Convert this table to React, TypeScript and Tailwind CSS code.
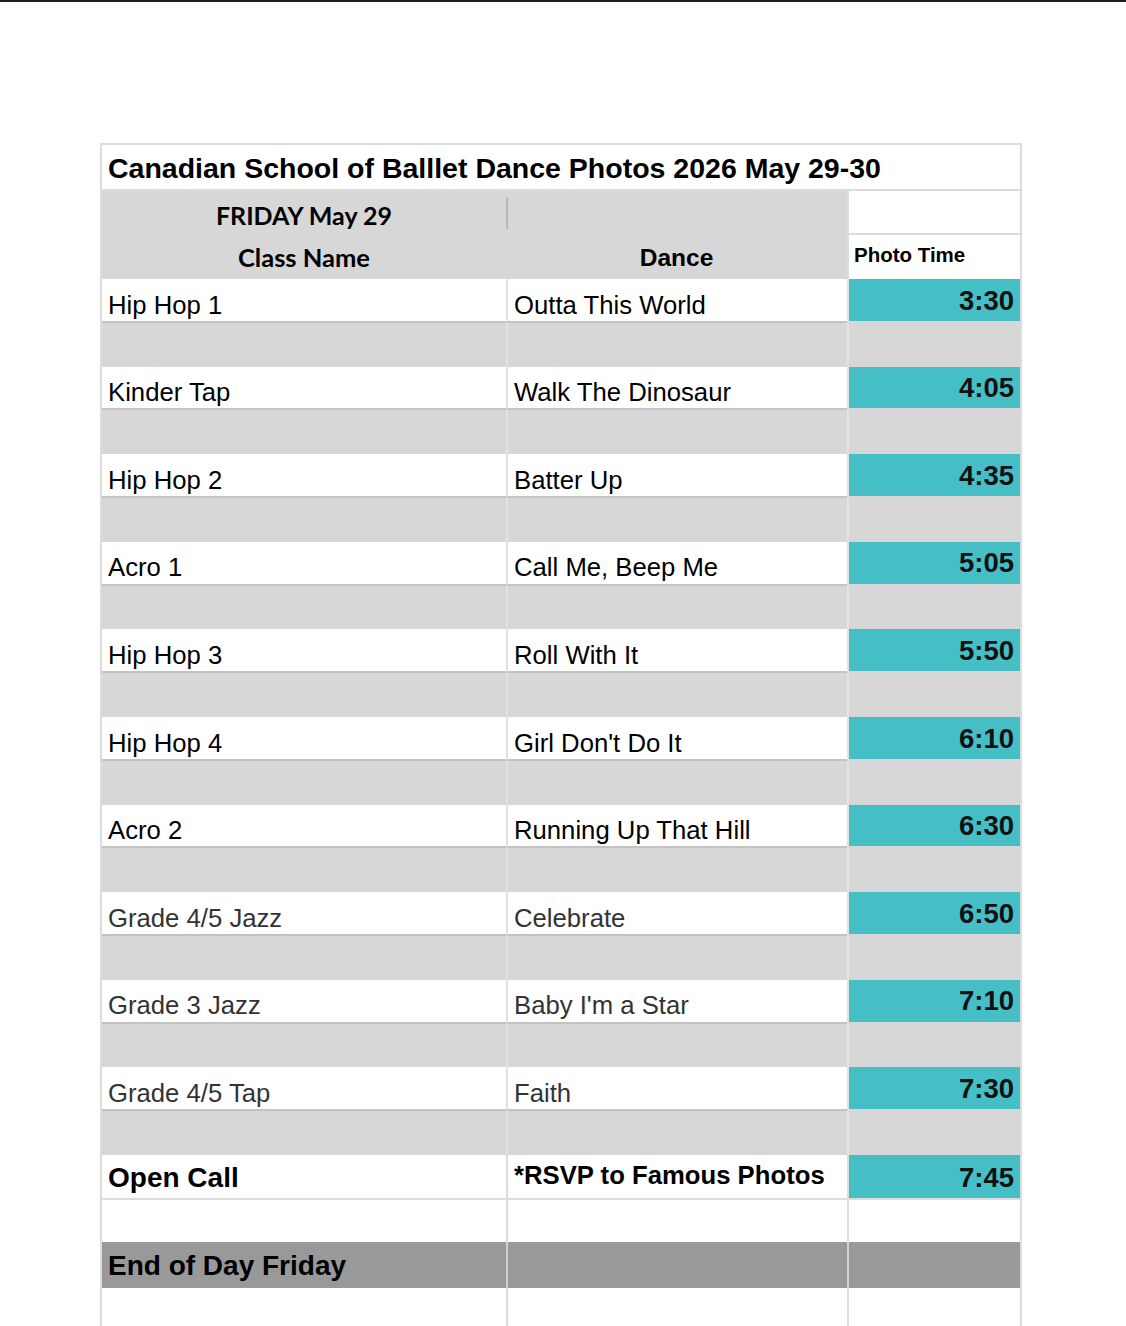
const rows = [
  { cls: "Hip Hop 1", dance: "Outta This World", time: "3:30" },
  { cls: "Kinder Tap", dance: "Walk The Dinosaur", time: "4:05" },
  { cls: "Hip Hop 2", dance: "Batter Up", time: "4:35" },
  { cls: "Acro 1", dance: "Call Me, Beep Me", time: "5:05" },
  { cls: "Hip Hop 3", dance: "Roll With It", time: "5:50" },
  { cls: "Hip Hop 4", dance: "Girl Don't Do It", time: "6:10" },
  { cls: "Acro 2", dance: "Running Up That Hill", time: "6:30" },
  { cls: "Grade 4/5 Jazz", dance: "Celebrate", time: "6:50", dim: true },
  { cls: "Grade 3 Jazz", dance: "Baby I'm a Star", time: "7:10", dim: true },
  { cls: "Grade 4/5 Tap", dance: "Faith", time: "7:30", dim: true },
];

const sans = "font-['Liberation_Sans',Arial,sans-serif]";
const calibri = "font-['Lato','Open_Sans',sans-serif]";

export default function App() {
  return (
    <div className="min-h-[1326px] bg-white">
      <div className="h-[2px] bg-[#1f1f1f]" />
      <div className={`ml-[100px] mt-[141px] w-[922px] border-2 border-b-0 border-[#dcdcdc] leading-none ${sans} text-black`}>
        {/* Title */}
        <div className="flex h-[46px] items-center border-b-2 border-[#dcdcdc] px-[6px] pt-[2px] text-[28.5px] font-bold">
          Canadian School of Balllet Dance Photos 2026 May 29-30
        </div>

        {/* Day header */}
        <div className="grid h-[44px] grid-cols-[404px_341px_173px]">
          <div className={`flex items-center justify-center bg-[#d7d7d7] pt-[4px] text-[25px] font-bold ${calibri}`}>
            FRIDAY May 29
          </div>
          <div className="flex bg-[#d7d7d7] py-[6px]">
            <div className="w-[2px] bg-[#b9b9b9]" />
          </div>
          <div className="border-b-2 border-l-2 border-[#dcdcdc] bg-white" />
        </div>

        {/* Column headers */}
        <div className="grid h-[44px] grid-cols-[404px_341px_173px]">
          <div className={`flex items-center justify-center bg-[#d7d7d7] pt-[2px] text-[25.5px] font-bold ${calibri}`}>
            Class Name
          </div>
          <div className="flex items-center justify-center bg-[#d7d7d7] pt-[2px] text-[24.5px] font-bold">
            Dance
          </div>
          <div className="flex items-center border-l-2 border-[#dcdcdc] bg-white px-[5px] pb-[4px] text-[20.5px] font-bold">
            Photo Time
          </div>
        </div>

        {/* Classes */}
        {rows.map((r) => (
          <div key={r.cls}>
            <div className="grid h-[43.8px] grid-cols-[404px_341px_173px] bg-[#d7d7d7]">
              <div
                className={`flex items-center border-b-2 border-[#c3c3c3] bg-white px-[6px] pt-[11px] text-[25.7px] ${
                  r.dim ? "text-[#333]" : ""
                }`}
              >
                {r.cls}
              </div>
              <div
                className={`flex items-center border-b-2 border-l-2 border-[#c3c3c3] border-l-[#e2e2e2] bg-white px-[6px] pt-[11px] text-[25.7px] ${
                  r.dim ? "text-[#333]" : ""
                }`}
              >
                {r.dance}
              </div>
              <div className="flex items-center justify-end border-b-2 border-l-2 border-[#e2e2e2] border-b-[#d7d7d7] bg-[#45bec6] px-[6px] pt-[1px] text-[27.5px] font-bold text-[#111]">
                {r.time}
              </div>
            </div>
            <div className="grid h-[43.8px] grid-cols-[404px_341px_173px] bg-[#d7d7d7]">
              <div />
              <div className="border-l-2 border-[#e2e2e2]" />
              <div className="border-l-2 border-[#e2e2e2]" />
            </div>
          </div>
        ))}

        {/* Open call */}
        <div className="grid h-[45px] grid-cols-[404px_341px_173px]">
          <div className="flex items-center border-b-2 border-[#dcdcdc] bg-white px-[6px] pt-[4px] text-[28px] font-bold">
            Open Call
          </div>
          <div className="flex items-center border-b-2 border-l-2 border-[#dcdcdc] bg-white px-[6px] pb-[1px] text-[25.7px] font-bold">
            *RSVP to Famous Photos
          </div>
          <div className="flex items-center justify-end border-b-2 border-l-2 border-[#dcdcdc] bg-[#45bec6] px-[6px] pt-[2px] text-[27.5px] font-bold text-[#111]">
            7:45
          </div>
        </div>

        <div className="grid h-[42px] grid-cols-[404px_341px_173px] bg-white">
          <div />
          <div className="border-l-2 border-[#dcdcdc]" />
          <div className="border-l-2 border-[#dcdcdc]" />
        </div>

        {/* End of day */}
        <div className="grid h-[46px] grid-cols-[404px_341px_173px] bg-[#999999]">
          <div className="flex items-center px-[6px] pt-[2px] text-[28px] font-bold">
            End of Day Friday
          </div>
          <div className="border-l-2 border-[#d2d2d2]" />
          <div className="border-l-2 border-[#d2d2d2]" />
        </div>

        <div className="grid h-[60px] grid-cols-[404px_341px_173px] bg-white">
          <div />
          <div className="border-l-2 border-[#dcdcdc]" />
          <div className="border-l-2 border-[#dcdcdc]" />
        </div>
      </div>
    </div>
  );
}
